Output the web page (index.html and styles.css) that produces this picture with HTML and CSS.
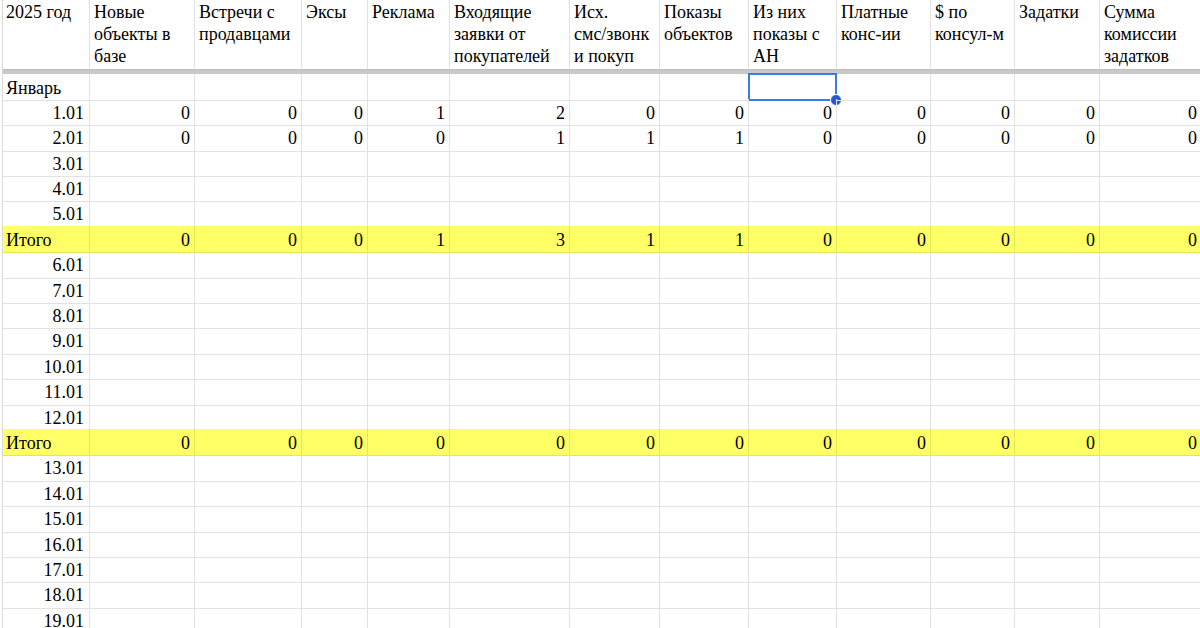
FILE: index.html
```html
<!DOCTYPE html>
<html lang="ru">
<head>
<meta charset="utf-8">
<title>2025 год</title>
<link rel="stylesheet" href="styles.css">
</head>
<body>
<div class="sheet">
  <div class="row head">
    <div class="cell">2025 год</div>
    <div class="cell">Новые<br>объекты в<br>базе</div>
    <div class="cell">Встречи с<br>продавцами</div>
    <div class="cell">Эксы</div>
    <div class="cell">Реклама</div>
    <div class="cell">Входящие<br>заявки от<br>покупателей</div>
    <div class="cell">Исх.<br>смс/звонк<br>и покуп</div>
    <div class="cell">Показы<br>объектов</div>
    <div class="cell">Из них<br>показы с<br>АН</div>
    <div class="cell">Платные<br>конс-ии</div>
    <div class="cell">$ по<br>консул-м</div>
    <div class="cell">Задатки</div>
    <div class="cell">Сумма<br>комиссии<br>задатков</div>
  </div>
  <div class="freeze"></div>
  <div class="body" id="body"></div>
</div>
<script src="app.js"></script>
</body>
</html>
```

FILE: styles.css
```css
html, body {
  margin: 0;
  padding: 0;
  background: #fff;
  overflow: hidden;
}
body {
  width: 1200px;
  height: 628px;
  font-family: "Liberation Serif", "Times New Roman", serif;
  font-size: 18px;
  color: #000;
}
.sheet {
  margin-left: 2px;
  border-left: 1px solid #d9d9d9;
  width: 1198px;
  height: 628px;
  overflow: hidden;
}
.row {
  display: grid;
  grid-template-columns: 87px 105px 107px 66px 82px 120px 90px 89px 88px 94px 84px 85px 102px;
  height: 25.4px;
}
.cell {
  border-right: 1px solid #e2e2e2;
  border-bottom: 1px solid #e2e2e2;
  padding: 1.5px 4px 0 4px;
  line-height: 24.4px;
  white-space: nowrap;
  position: relative;
}
.num { text-align: right; padding-right: 4px; }
.row > .num:first-child { padding-right: 5px; }
.head { height: 69px; }
.head .cell {
  border-bottom: none;
  line-height: 22px;
  padding-top: 1px;
  padding-left: 4px;
  padding-right: 2px;
}
.head .cell:first-child { padding-left: 3px; }
.freeze {
  height: 5px;
  background: #c9c9c9;
  border-top: 1px solid #bdbdbd;
  box-sizing: border-box;
}
.total .cell {
  background: #ffff66;
  border-bottom-color: #e6e65a;
  border-right-color: #e6e65a;
}
.label { padding-left: 3px; }
.sel {
  position: absolute;
  left: -1px;
  top: -1px;
  right: -1px;
  bottom: -1px;
  border: 2px solid #3b7be6;
}
.sel::after {
  content: "";
  position: absolute;
  right: -7px;
  bottom: -7px;
  width: 10px;
  height: 10px;
  border-radius: 50%;
  background: #2458d4;
  border: 1px solid #fff;
}
```

FILE: app.js
```js
const rows = [
  { label: "Январь", type: "month" },
  { label: "1.01", v: [0,0,0,1,2,0,0,0,0,0,0,0] },
  { label: "2.01", v: [0,0,0,0,1,1,1,0,0,0,0,0] },
  { label: "3.01" }, { label: "4.01" }, { label: "5.01" },
  { label: "Итого", type: "total", v: [0,0,0,1,3,1,1,0,0,0,0,0] },
  { label: "6.01" }, { label: "7.01" }, { label: "8.01" }, { label: "9.01" },
  { label: "10.01" }, { label: "11.01" }, { label: "12.01" },
  { label: "Итого", type: "total", v: [0,0,0,0,0,0,0,0,0,0,0,0] },
  { label: "13.01" }, { label: "14.01" }, { label: "15.01" }, { label: "16.01" },
  { label: "17.01" }, { label: "18.01" }, { label: "19.01" }
];
const body = document.getElementById("body");
rows.forEach((r, ri) => {
  const row = document.createElement("div");
  row.className = "row" + (r.type === "total" ? " total" : "");
  const first = document.createElement("div");
  first.className = "cell" + (r.type ? " label" : " num");
  first.textContent = r.label;
  row.appendChild(first);
  for (let c = 0; c < 12; c++) {
    const cell = document.createElement("div");
    cell.className = "cell num";
    if (r.v) cell.textContent = r.v[c];
    if (ri === 0 && c === 7) {
      const s = document.createElement("div");
      s.className = "sel";
      cell.appendChild(s);
    }
    row.appendChild(cell);
  }
  body.appendChild(row);
});
```
